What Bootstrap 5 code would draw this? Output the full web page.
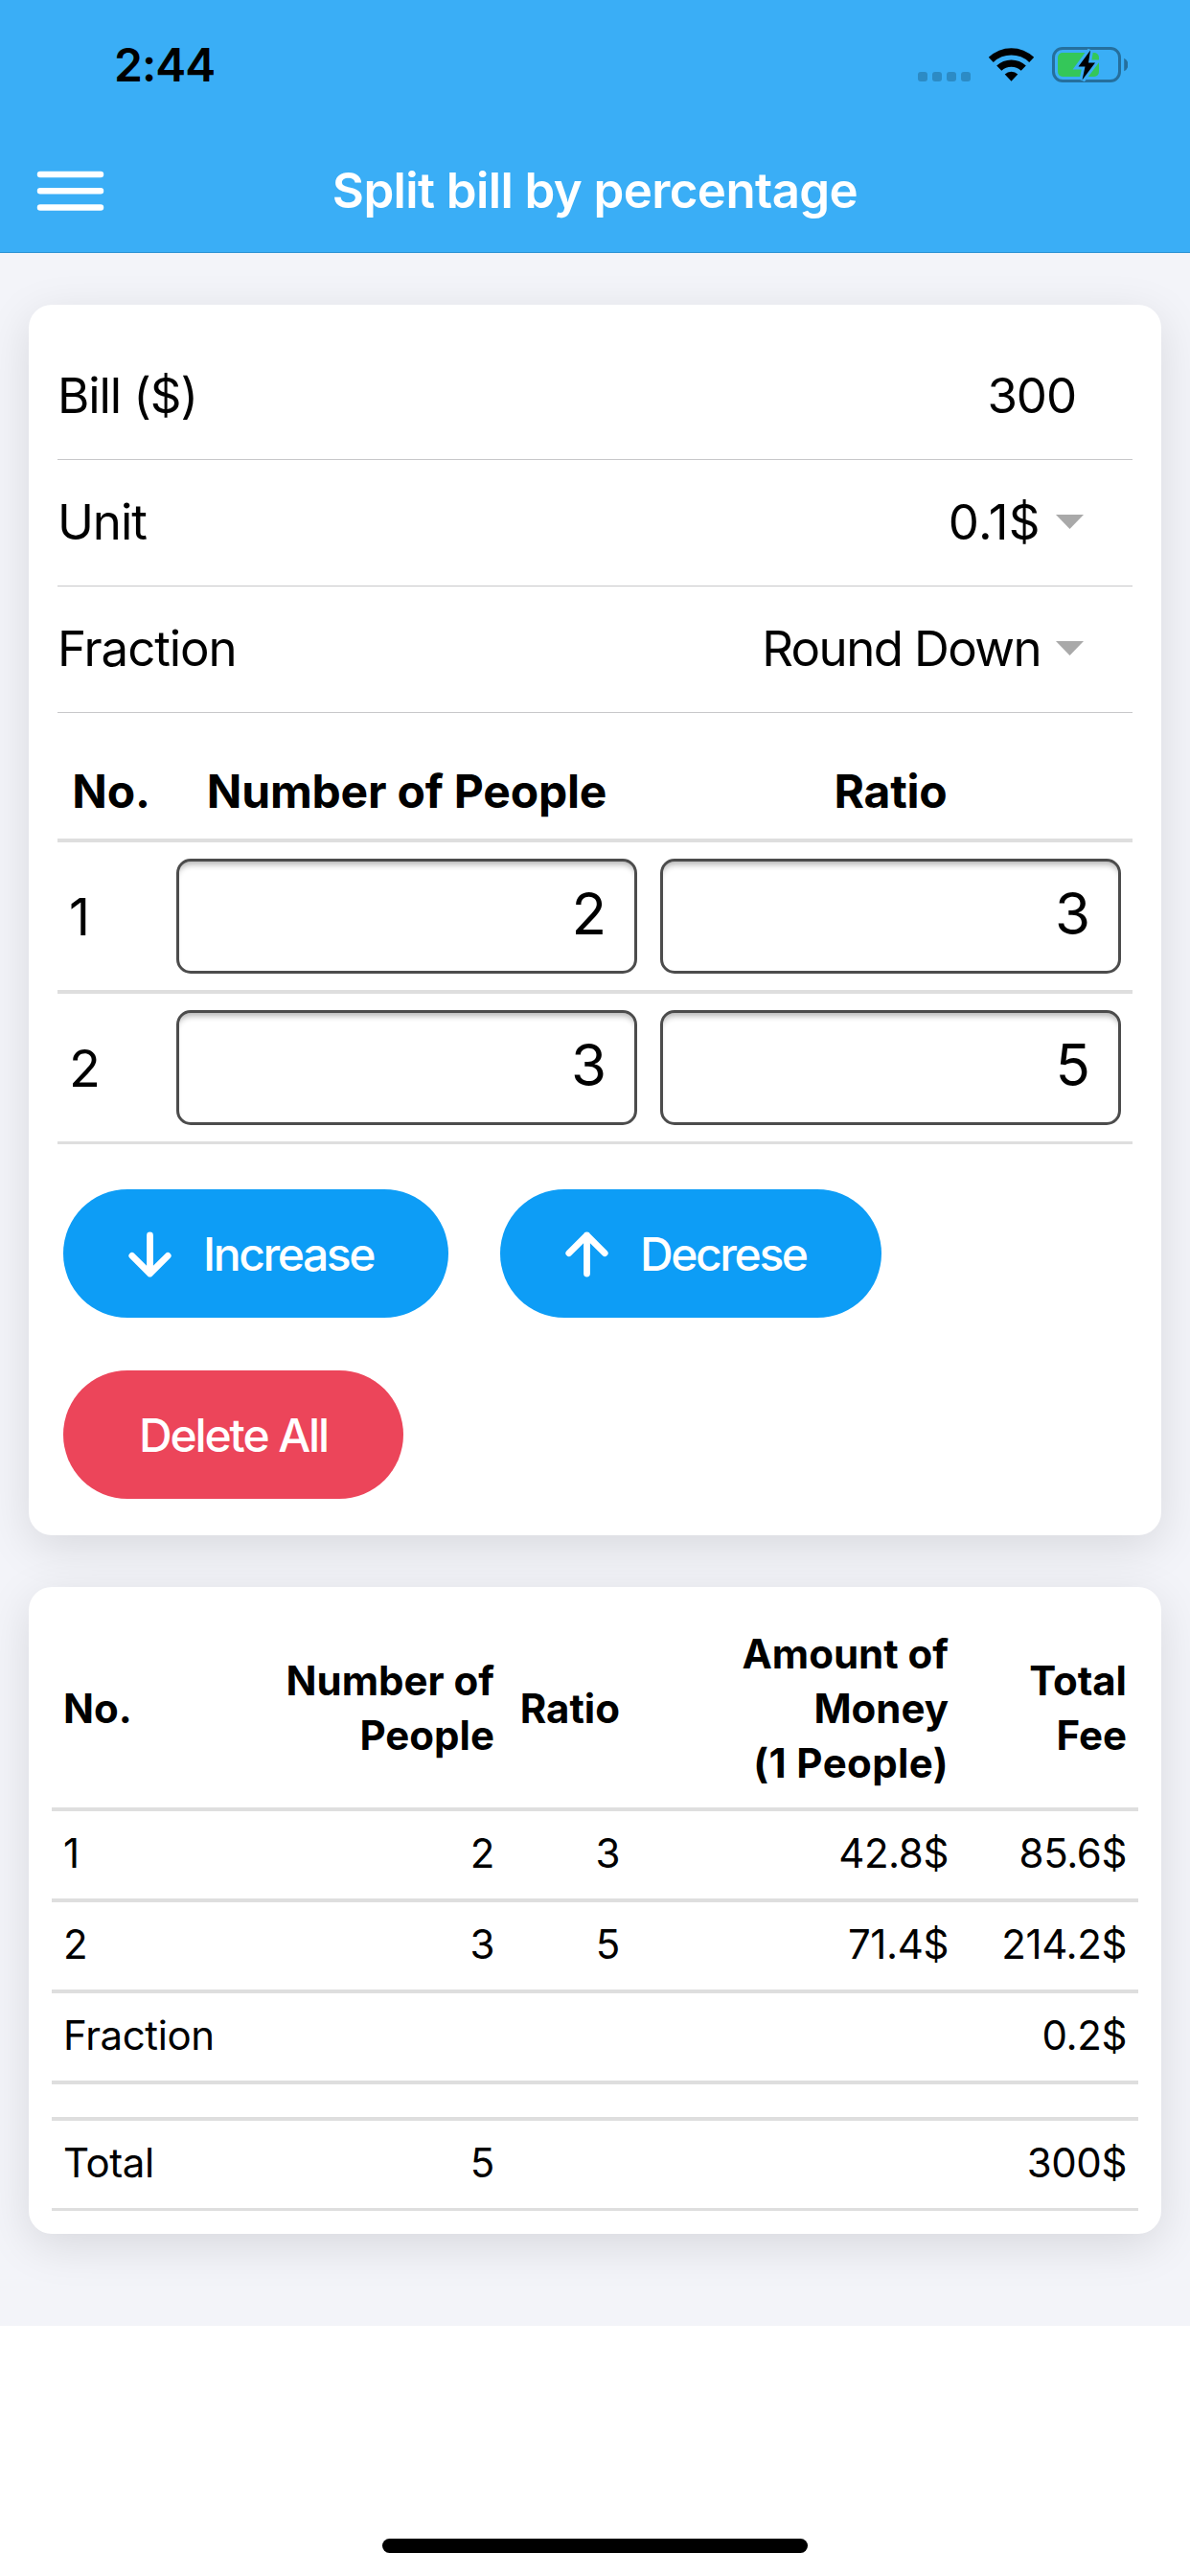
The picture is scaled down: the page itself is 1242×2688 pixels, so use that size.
<!DOCTYPE html>
<html lang="en">
<head>
    <meta charset="UTF-8">
    <meta name="viewport" content="width=device-width, initial-scale=1.0">
    <title>Split bill by percentage</title>
    <link rel="stylesheet" href="https://cdn.jsdelivr.net/npm/bootstrap@5.3.0/dist/css/bootstrap.min.css">
    <style>
        body {
            font-family: Inter, "Liberation Sans", sans-serif;
            color: #000;
            background: #fff;
            height: 2688px;
            overflow: hidden;
        }

        /* Header */
        .app-header {
            height: 264px;
            background: #3aaef6;
            border-bottom: 1px solid #2e93d3;
        }
        .status-bar {
            height: 132px;
            padding: 3px 65px 0 119px;
        }
        .clock {
            font-size: 48px;
            font-weight: 600;
            line-height: 1;
            letter-spacing: -1px;
        }
        .title-bar {
            display: grid;
            grid-template-columns: 1fr auto 1fr;
            height: 131px;
            padding: 2px 38px 0;
        }
        .page-title {
            font-size: 51px;
            font-weight: 600;
            line-height: 1;
            letter-spacing: -.6px;
        }

        /* Cards */
        .page-content {
            height: 2163px;
            padding: 54px 30px 0;
            background: #f3f4f9;
        }
        .panel {
            --bs-card-border-width: 0;
            --bs-card-border-radius: 24px;
            --bs-card-color: #000;
            box-shadow: 0 12px 48px rgba(0, 0, 0, .115);
        }
        .bill-panel {
            height: 1284px;
            padding: 30px 30px 0;
            margin-bottom: 54px;
        }
        .result-panel {
            height: 675px;
            padding: 24px;
        }

        /* Settings rows */
        .field-row {
            height: 132px;
            padding: 0 51px 3px 0;
            border-bottom: 1px solid #c8c8ca;
            font-size: 51px;
            line-height: 1;
            letter-spacing: -1.1px;
        }
        .field-row.plain {
            padding-right: 59px;
        }
        .field-row svg {
            margin-left: 16px;
        }
        .unit-value {
            letter-spacing: .4px;
        }
        .round-value {
            letter-spacing: -1.6px;
        }

        /* Tables */
        .split-table {
            --bs-table-color: #000;
            --bs-table-bg: transparent;
            table-layout: fixed;
            border-collapse: separate;
            border-spacing: 0;
            margin: 0;
        }
        .split-table > * > tr > * {
            border-bottom: 4px solid #dedede;
            vertical-align: middle;
        }
        .split-table > tbody > tr:last-child > * {
            border-bottom-width: 3px;
        }
        .input-table {
            margin-top: 32px;
        }
        .input-table th {
            height: 103px;
            padding: 0;
            font-size: 48px;
            line-height: 1;
            letter-spacing: -.2px;
            text-align: center;
        }
        .input-table td {
            height: 158px;
            padding: 0 12px;
            font-size: 54px;
            line-height: 1;
        }
        .input-table td:first-child {
            padding-top: 2px;
        }
        .input-table tr:last-child td {
            height: 157px;
        }
        .input-table .form-control {
            height: 120px;
            padding: 0 29px 7px;
            border: 3px solid #4c4c4c;
            border-radius: 15px;
            color: #000;
            font-size: 60px;
            line-height: 1;
            box-shadow: inset 0 7px 6px -4px rgba(0, 0, 0, .3);
        }
        .result-table th,
        .result-table td {
            font-size: 42px;
            line-height: 57px;
            padding: 14px 12px 19px;
            height: 95px;
        }
        .result-table td {
            letter-spacing: -.4px;
        }
        .result-table thead th {
            height: 210px;
            padding-top: 16px;
            padding-bottom: 18px;
        }
        .result-table .spacer td {
            height: 38px;
            padding: 0;
        }
        .result-table tr:last-child td {
            height: 94px;
        }
        .per-person {
            letter-spacing: .4px;
        }

        /* Buttons */
        .actions {
            gap: 55px 54px;
            padding: 47px 6px 0;
        }
        .pill {
            height: 134px;
            padding: 1px 0 0;
            border: 0;
            border-radius: 67px;
            color: #fff;
            font-size: 48px;
            font-weight: 500;
            line-height: 1;
            letter-spacing: -2.4px;
        }
        .pill svg {
            margin: 0 33px 0 68px;
        }
        .pill-blue {
            background: #0d9df6;
        }
        .pill-red {
            background: #ec455a;
            width: 355px;
            letter-spacing: -2.1px;
        }
        .pill-increase {
            width: 402px;
        }
        .pill-decrease {
            width: 398px;
        }

        .home-bar {
            width: 444px;
            height: 15px;
            margin-top: 222px;
            background: #000;
        }
    </style>
</head>
<body>
    <header class="app-header">
        <div class="status-bar d-flex justify-content-between align-items-center">
            <div class="clock">2:44</div>
            <svg width="219" height="38" viewBox="958 49 219 38">
                <g fill="#2c8bc5">
                    <rect x="958" y="75" width="10" height="10" rx="3"/>
                    <rect x="973" y="75" width="10" height="10" rx="3"/>
                    <rect x="988" y="75" width="10" height="10" rx="3"/>
                    <rect x="1003" y="75" width="10" height="10" rx="3"/>
                </g>
                <path d="M1031.800 59.800a34 34 0 0 1 47.400 0l-5 5.200a26.800 26.800 0 0 0-37.400 0z"/>
                <path d="M1040.200 68.600a22 22 0 0 1 30.600 0l-5.100 5.200a14.800 14.800 0 0 0-20.400 0z"/>
                <path d="M1048.700 77.500a9.800 9.800 0 0 1 13.600 0l-6.800 7.300z"/>
                <!-- battery -->
                <rect x="1099.500" y="50.500" width="69" height="34" rx="9.500" fill="none" stroke="#256f9d" stroke-width="3"/>
                <path d="M1173.200 60.800v13.500a7.500 7.500 0 0 0 0-13.500z" fill="#256f9d"/>
                <rect x="1104" y="55" width="43" height="25" rx="5" fill="#34c759"/>
                <path d="M1138 52.500L1125.500 69.500H1132.500L1129.500 83.500L1143 65.500H1136z" stroke="#3aaef6" stroke-width="6"/>
                <path d="M1138 52.500L1125.500 69.500H1132.500L1129.500 83.500L1143 65.500H1136z"/>
            </svg>
        </div>
        <div class="title-bar align-items-center">
            <svg width="71" height="42" viewBox="0 0 71 42" stroke="#fff" stroke-width="6.500" stroke-linecap="round">
                <path d="M4 4H67M4 21.300H67M4 38.500H67"/>
            </svg>
            <div class="page-title text-white">Split bill by percentage</div>
            <span></span>
        </div>
    </header>

    <main class="page-content">
        <section class="card panel bill-panel">
            <div class="field-row plain d-flex align-items-center justify-content-between">
                <span>Bill ($)</span>
                <span>300</span>
            </div>
            <div class="field-row d-flex align-items-center">
                <span class="me-auto">Unit</span>
                <span class="unit-value">0.1$</span>
                <svg width="29" height="15" viewBox="0 0 29 15"><path d="M0 0H29L14.500 15z" fill="#a9a9a9"/></svg>
            </div>
            <div class="field-row d-flex align-items-center">
                <span class="me-auto">Fraction</span>
                <span class="round-value">Round Down</span>
                <svg width="29" height="15" viewBox="0 0 29 15"><path d="M0 0H29L14.500 15z" fill="#a9a9a9"/></svg>
            </div>

            <table class="table split-table input-table">
                <colgroup>
                    <col width="112">
                    <col width="505">
                    <col width="505">
                </colgroup>
                <thead>
                    <tr>
                        <th>No.</th>
                        <th>Number of People</th>
                        <th>Ratio</th>
                    </tr>
                </thead>
                <tbody>
                    <tr>
                        <td>1</td>
                        <td><input type="text" class="form-control text-end" value="2"></td>
                        <td><input type="text" class="form-control text-end" value="3"></td>
                    </tr>
                    <tr>
                        <td>2</td>
                        <td><input type="text" class="form-control text-end" value="3"></td>
                        <td><input type="text" class="form-control text-end" value="5"></td>
                    </tr>
                </tbody>
            </table>

            <div class="actions d-flex flex-wrap">
                <button class="btn pill pill-blue pill-increase d-flex align-items-center">
                    <svg width="45" height="48" viewBox="0 0 45 48" fill="none" stroke="#fff" stroke-width="6.800" stroke-linecap="round" stroke-linejoin="round">
                        <path d="M22.500 4V44M3.800 25.300L22.500 44L41.200 25.300"/>
                    </svg>
                    Increase
                </button>
                <button class="btn pill pill-blue pill-decrease d-flex align-items-center">
                    <svg width="45" height="48" viewBox="0 0 45 48" fill="none" stroke="#fff" stroke-width="6.800" stroke-linecap="round" stroke-linejoin="round">
                        <path d="M22.500 44V4M3.800 22.700L22.500 4L41.200 22.700"/>
                    </svg>
                    Decrese
                </button>
                <button class="btn pill pill-red">Delete All</button>
            </div>
        </section>

        <section class="card panel result-panel">
            <table class="table split-table result-table text-end">
                <colgroup>
                    <col width="200">
                    <col width="274">
                    <col width="131">
                    <col width="343">
                    <col width="186">
                </colgroup>
                <thead>
                    <tr>
                        <th class="text-start">No.</th>
                        <th>Number of<br>People</th>
                        <th>Ratio</th>
                        <th>Amount of<br>Money<br><span class="per-person">(1 People)</span></th>
                        <th>Total<br>Fee</th>
                    </tr>
                </thead>
                <tbody>
                    <tr>
                        <td class="text-start">1</td>
                        <td>2</td>
                        <td>3</td>
                        <td>42.8$</td>
                        <td>85.6$</td>
                    </tr>
                    <tr>
                        <td class="text-start">2</td>
                        <td>3</td>
                        <td>5</td>
                        <td>71.4$</td>
                        <td>214.2$</td>
                    </tr>
                    <tr>
                        <td class="text-start">Fraction</td>
                        <td></td>
                        <td></td>
                        <td></td>
                        <td>0.2$</td>
                    </tr>
                    <tr class="spacer">
                        <td colspan="5"></td>
                    </tr>
                    <tr>
                        <td class="text-start">Total</td>
                        <td>5</td>
                        <td></td>
                        <td></td>
                        <td>300$</td>
                    </tr>
                </tbody>
            </table>
        </section>
    </main>

    <div class="home-bar rounded-pill mx-auto"></div>

    <script src="https://cdn.jsdelivr.net/npm/bootstrap@5.3.0/dist/js/bootstrap.bundle.min.js"></script>
</body>
</html>
